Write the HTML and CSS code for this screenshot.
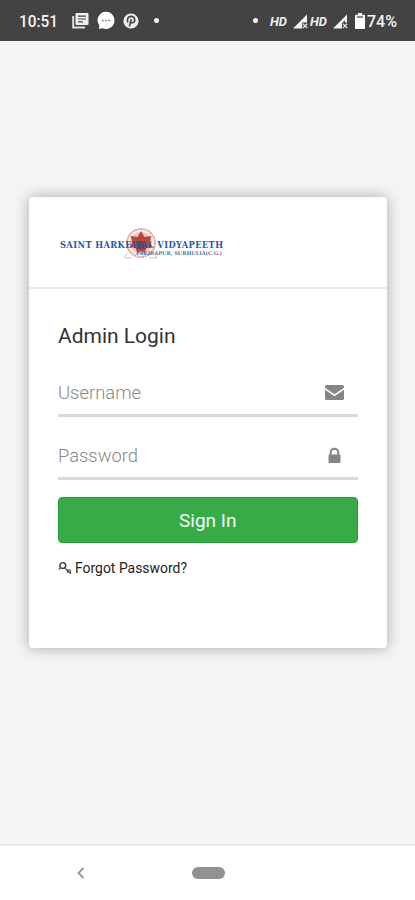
FILE: index.html
```html
<!DOCTYPE html>
<html lang="en">
<head>
<meta charset="utf-8">
<title>Admin Login</title>
<link rel="stylesheet" href="styles.css">
</head>
<body>
<header class="status">
  <div class="status-left">
    <svg class="clock" width="40" height="18"><text x="0" y="15" textLength="39" lengthAdjust="spacingAndGlyphs">10:51</text></svg>
    <svg width="17" height="17" viewBox="0 0 17 17"><path d="M1.2 4v11.5H13" fill="none" stroke="#ddd" stroke-width="2"/><rect x="3.5" y="1" width="13" height="12" rx="1" fill="#eee"/><path d="M6 4.2h8M6 7h8M6 9.8h5" stroke="#444" stroke-width="1.2"/></svg>
    <svg width="18" height="19" viewBox="0 0 18 19"><path d="M9 .8a8.6 8.6 0 1 1-3.5 16.5L2 18l.3-3.5A8.6 8.6 0 0 1 9 .8z" fill="#fff"/><path d="M5 9.5h1.6M8.2 9.5h1.6M11.4 9.5H13" stroke="#777" stroke-width="1.3"/></svg>
    <svg width="16" height="16" viewBox="0 0 16 16"><circle cx="8" cy="8" r="7.6" fill="#eee"/><path d="M5.2 9.2C3.8 7.800 4 3.400 8.200 3.400s4.600 5.900 1.300 6.400c-1.200.2-1.800-.7-1.800-.7M8.300 6 6.400 13.500" fill="none" stroke="#444" stroke-width="1.600"/></svg>
    <i class="dot"></i>
  </div>
  <div class="status-right">
    <i class="dot"></i>
    <svg class="hd" width="18" height="14"><text x="0" y="11.500" textLength="17" lengthAdjust="spacingAndGlyphs">HD</text></svg>
    <svg class="signal" width="15" height="15" viewBox="0 0 15 15"><path d="M0 14.500 14 .5v8H9.200v6z" fill="#f2f2f2"/><path d="m10 9.800 4.200 4.200m0-4.200L10 14" stroke="#ddd" stroke-width="1.300"/></svg>
    <svg class="hd" width="18" height="14"><text x="0" y="11.500" textLength="17" lengthAdjust="spacingAndGlyphs">HD</text></svg>
    <svg class="signal second" width="15" height="15" viewBox="0 0 15 15"><path d="M0 14.500 14 .5v8h-2V6.500L9 9v5.500z" fill="#f2f2f2"/><path d="m10 9.800 4.200 4.200m0-4.200L10 14" stroke="#ddd" stroke-width="1.300"/></svg>
    <svg class="battery" width="10" height="16" viewBox="0 0 10 16"><path d="M3 0h4v1.700h2a1 1 0 0 1 1 1V15a1 1 0 0 1-1 1H1a1 1 0 0 1-1-1V2.700a1 1 0 0 1 1-1h2z" fill="#fff"/><path d="M2 4h6" stroke="#555" stroke-width="1.400"/></svg>
    <svg class="percent" width="30" height="18"><text x="0" y="15" textLength="30" lengthAdjust="spacingAndGlyphs">74%</text></svg>
  </div>
</header>
<main class="page">
  <section class="card">
    <div class="brand">
      <svg width="166" height="38" viewBox="0 0 166 38">
        <circle cx="82" cy="17" r="14" fill="#fbf1ef" stroke="#d7a7a4" stroke-width="2" stroke-dasharray="2 .7"/>
        <circle cx="82" cy="17" r="11" fill="#e9c9c0"/>
        <path d="m82 5 3.500 6 7-1-2 6 3 5-6 1-2 5-3.500-2-3.500 2-2-5-6-1 3-5-2-6 7 1z" fill="#b9483a"/>
        <path d="M79 15h6l2 8H77z" fill="#70405e"/>
        <path d="M68 27c-1 3-3 3-2 5h6M96 28l2 4h-8" fill="none" stroke="#c9c3c9"/>
        <text class="brand-name" x="1" y="21.500" textLength="163">SAINT HARKEWAL VIDYAPEETH</text>
        <text class="brand-place" x="77" y="29" textLength="86">FAKIRAPUR, SURHULIA(C.G.)</text>
      </svg>
    </div>
    <form class="login">
      <h1><svg width="119" height="30"><text x="0" y="22.500" textLength="117.500" lengthAdjust="spacingAndGlyphs">Admin Login</text></svg></h1>
      <div class="field">
        <svg class="hint" width="90" height="24"><text x="0" y="20" textLength="83" lengthAdjust="spacingAndGlyphs">Username</text></svg>
        <svg class="icon" width="19" height="15" viewBox="0 0 19 15"><path d="M1.500 0h16A1.500 1.500 0 0 1 19 1.500v1.200L9.500 9.300 0 2.700V1.500A1.500 1.500 0 0 1 1.500 0zM0 4.800l9.500 6.500L19 4.800v8.700a1.500 1.500 0 0 1-1.500 1.500h-16A1.500 1.500 0 0 1 0 13.500z" fill="#858585"/></svg>
      </div>
      <div class="field">
        <svg class="hint" width="90" height="24"><text x="0" y="20" textLength="80" lengthAdjust="spacingAndGlyphs">Password</text></svg>
        <svg class="icon" width="19" height="15" viewBox="0 0 19 15"><path d="M5.700 7V4.500a3.800 3.800 0 0 1 7.600 0V7" fill="none" stroke="#858585" stroke-width="2"/><rect x="3.500" y="6.500" width="12" height="8.500" rx="1" fill="#858585"/></svg>
      </div>
      <button class="submit" type="button"><svg width="58" height="26"><text x="0" y="19.500" textLength="57.500" lengthAdjust="spacingAndGlyphs">Sign In</text></svg></button>
      <a class="forgot">
        <svg width="14" height="14" viewBox="0 0 14 14"><circle cx="4.800" cy="4.500" r="2.900" fill="none" stroke="#333" stroke-width="1.400"/><path d="m.8 8.500 2.200-2M6.500 6.800l5.500 5.200M9.500 9.500v2.500M12 8.800h-2.500M12.500 9v4" fill="none" stroke="#555" stroke-width="1.200"/></svg>
        <svg class="forgot-text" width="114" height="20"><text x="0" y="15" textLength="112" lengthAdjust="spacingAndGlyphs">Forgot Password?</text></svg>
      </a>
    </form>
  </section>
</main>
<nav class="navbar">
  <svg width="8" height="12" viewBox="0 0 8 12"><path d="M6.500 1 1.500 6l5 5" fill="none" stroke="#959595" stroke-width="1.800"/></svg>
  <span class="home"></span>
</nav>
</body>
</html>
```
FILE: styles.css
```css
* { box-sizing: border-box; }
body {
  margin: 0;
  height: 900px;
  display: flex;
  flex-direction: column;
  background: #f4f4f4;
  font-family: Roboto, "Liberation Sans", sans-serif;
}
svg { display: block; flex: none; overflow: visible; }
.status {
  height: 41px;
  flex: none;
  display: flex;
  justify-content: space-between;
  align-items: center;
  padding: 0 18px 0 19px;
  background: #434343;
}
.status-left, .status-right { display: flex; align-items: center; }
.status-left { gap: 8px; }
.clock { margin-right: 5px; }
.clock text, .percent text { font-size: 16px; font-weight: 500; fill: #f4f4f4; }
.dot { width: 5px; height: 5px; border-radius: 50%; background: #f4f4f4; }
.status-left .dot { margin-left: 7px; }
.status-right .dot { margin-right: 12px; }
.hd text { font-size: 13px; font-weight: 700; font-style: italic; fill: #eee; }
.signal { margin: 2px 2px 0 5px; }
.second { margin-right: 7px; }
.battery { margin-right: 2px; }
.page { flex: 1; padding: 156px 28px 0 29px; }
.card {
  height: 451px;
  border-radius: 4px;
  background: #fff;
  box-shadow: 0 0 14px rgba(0, 0, 0, 0.32);
}
.brand { height: 92px; padding: 29px 0 0 30px; border-bottom: 2px solid #ececec; }
.login { padding: 31px 29px 0; }
h1 { margin: 0; height: 48px; font-weight: 400; }
h1 text { font-size: 21px; fill: #333; }
.field {
  height: 49px;
  margin-bottom: 14px;
  display: flex;
  justify-content: space-between;
  align-items: center;
  padding: 0 14px 0 0;
  border-bottom: 3px solid #d9d9d9;
}
.icon { margin-top: 3px; }
.hint text { font-size: 18.500px; font-weight: 300; fill: #888; }
.submit {
  width: 100%;
  height: 46px;
  margin-top: 17px;
  padding: 0;
  display: flex;
  justify-content: center;
  align-items: center;
  border: 1px solid #20a13a;
  border-radius: 4px;
  background: #38ab49;
  font-family: inherit;
}
.field + .submit { margin-top: 17px; }
.field:nth-of-type(2) { margin-bottom: 0; }
.submit text { font-size: 18.500px; fill: #f1fff1; }
.forgot { margin-top: 15px; display: flex; align-items: center; gap: 3px; }
.forgot-text text { font-size: 14px; fill: #222; }
.navbar {
  height: 56px;
  flex: none;
  display: flex;
  align-items: center;
  gap: 107px;
  padding-left: 77px;
  border-top: 2px solid #e8e8e8;
  background: #fff;
}
.home { width: 33px; height: 12px; border-radius: 6px; background: #919191; }
.brand-name { font: 700 8.300px "DejaVu Serif", "Liberation Serif", serif; fill: #245ba8; }
.brand-place { font: 700 5.200px "DejaVu Serif", "Liberation Serif", serif; fill: #4a76ad; }
```
